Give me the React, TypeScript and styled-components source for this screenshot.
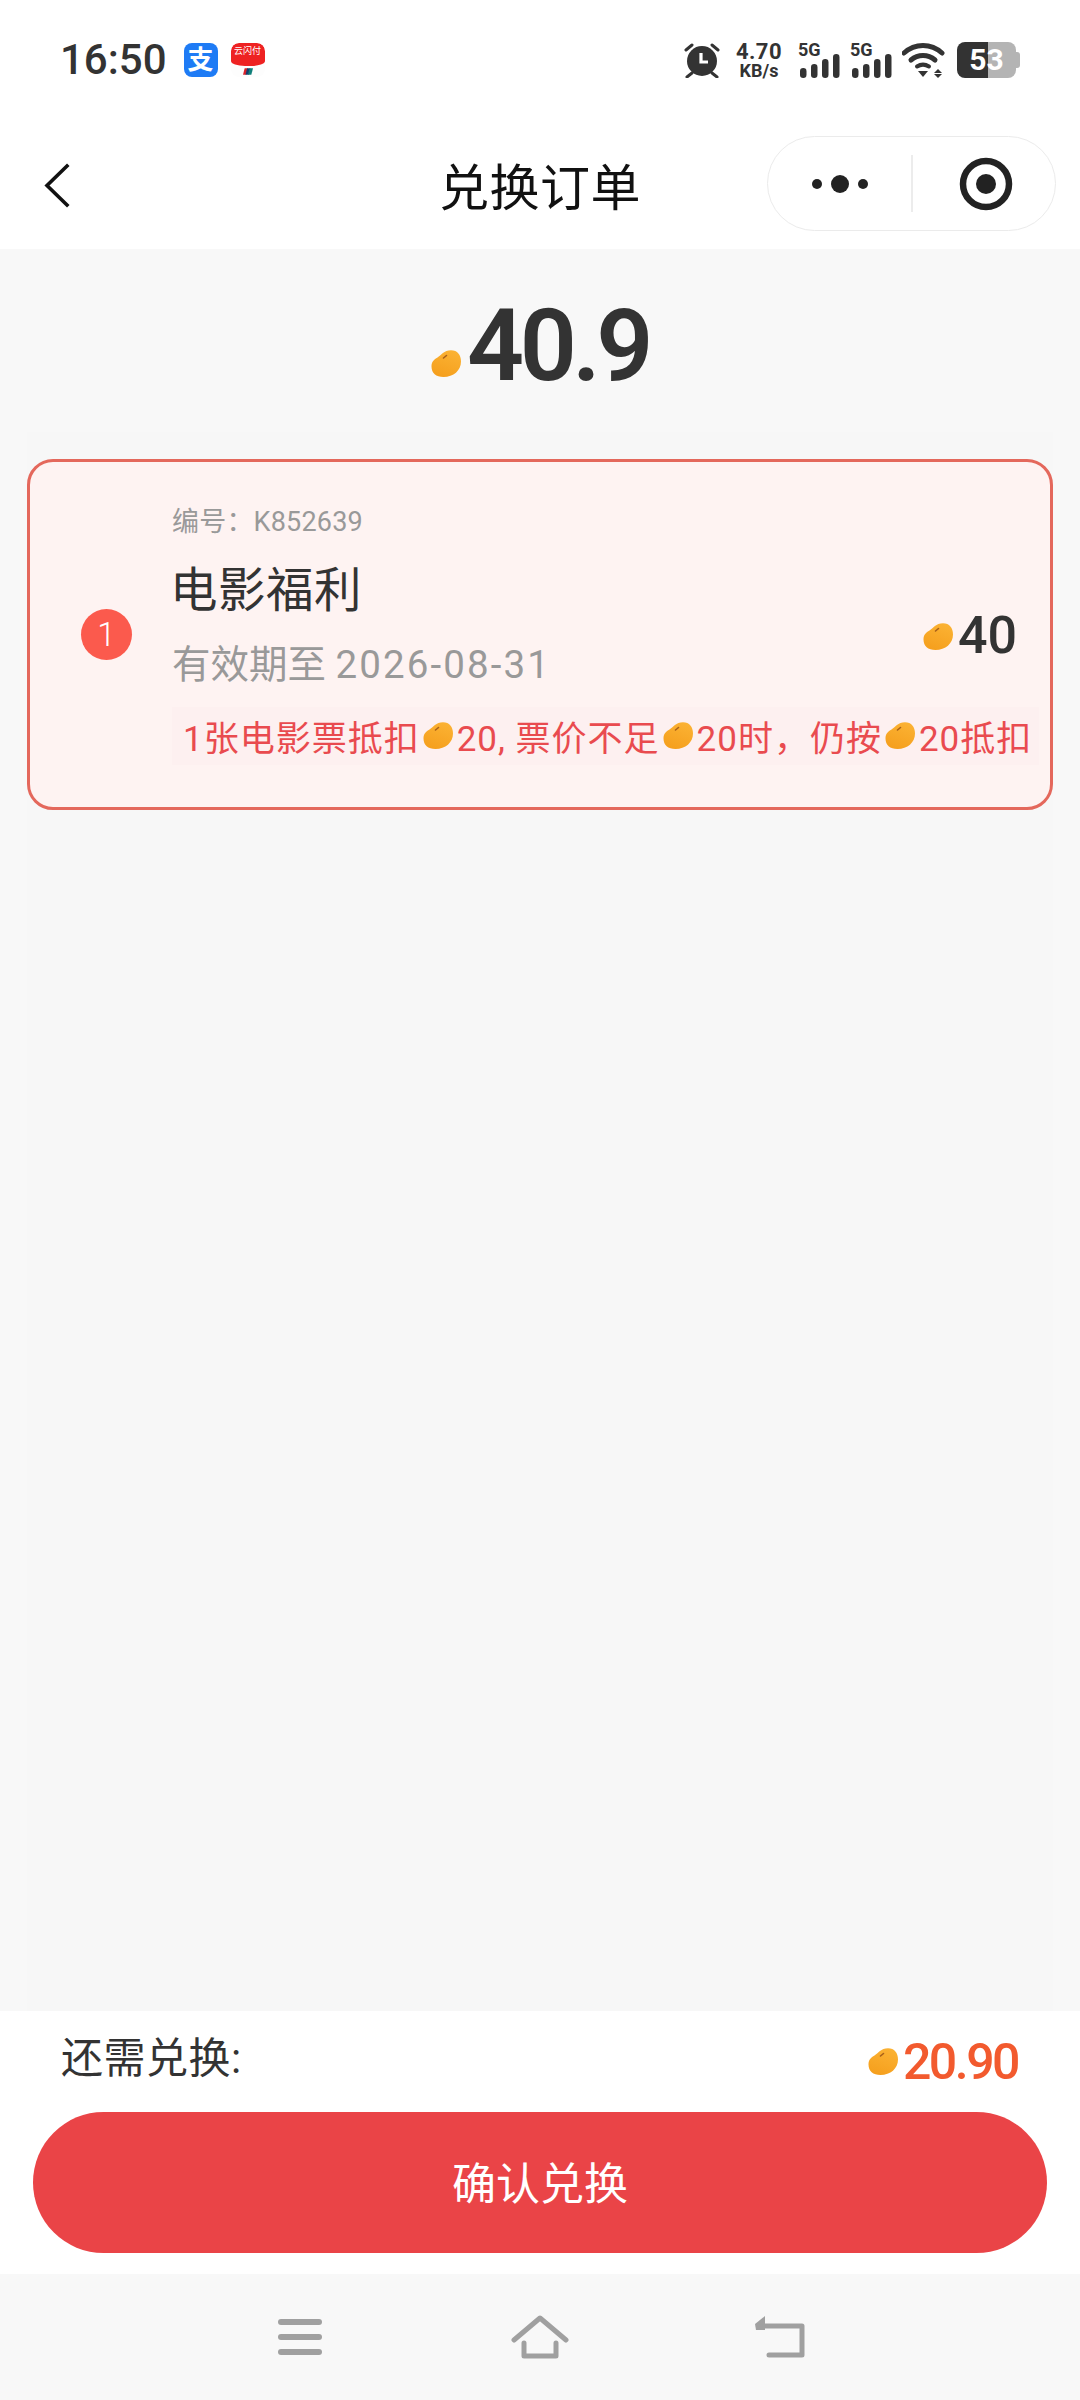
import { useId } from 'react';
import styled, { createGlobalStyle } from 'styled-components';

const GlobalStyle = createGlobalStyle`
  html, body {
    margin: 0;
    padding: 0;
    background: #f8f8f8;
    font-family: Roboto, "Noto Sans CJK SC", sans-serif;
  }
`;

function Bean({ width = 30, className }: { width?: number; className?: string }) {
  const id = useId();
  return (
    <BeanSvg className={className} width={width} height={width * 0.9} viewBox="0 0 30 27">
      <defs>
        <linearGradient id={id} x1="0.7" y1="0" x2="0.3" y2="1">
          <stop offset="0" stopColor="#fbb233" />
          <stop offset="1" stopColor="#f59f1d" />
        </linearGradient>
      </defs>
      <path
        d="M.5 16.500C.5 11.500 3 9.500 6.500 7.500C10 5.500 13 .3 20 .3C26.500 .3 30 5 30 11.500C30 20.500 22.500 27 12.500 27C5 27 .5 23 .5 16.500Z"
        fill={`url(#${id})`}
      />
      <path d="M12.500 8l3-2.500" stroke="#a8601a" strokeWidth="1.600" strokeLinecap="round" />
    </BeanSvg>
  );
}

function Signal() {
  return (
    <SignalBlock>
      <SignalLabel>5G</SignalLabel>
      <svg width="42" height="36" viewBox="0 0 42 36" fill="#333">
        <rect x="2" y="26" width="6.500" height="10" rx="3.200" />
        <rect x="13" y="22" width="6.500" height="14" rx="3.200" />
        <rect x="24" y="17" width="6.500" height="19" rx="3.200" />
        <rect x="35" y="12" width="6.500" height="24" rx="3.200" />
      </svg>
    </SignalBlock>
  );
}

export default function App() {
  return (
    <Page>
      <GlobalStyle />
      <StatusBar>
        <StatusLeft>
          <Clock>16:50</Clock>
          <AlipayIcon>支</AlipayIcon>
          <UnionIcon>
            <UnionTop>云闪付</UnionTop>
            <svg width="10" height="7" viewBox="0 0 12 8">
              <path d="M2 0h4L4 8H0z" fill="#d8232a" />
              <path d="M5 0h4L7 8H3z" fill="#14406e" />
              <path d="M8 0h4l-2 8H6z" fill="#0f7f7a" />
            </svg>
          </UnionIcon>
        </StatusLeft>
        <StatusRight>
          <svg width="36" height="36" viewBox="0 0 36 36">
            <circle cx="18" cy="19" r="15" fill="#333" />
            <path d="M17 11v9h7" fill="none" stroke="#fff" strokeWidth="3.200" />
            <path d="M2 8l6-5M34 8l-6-5M3 35l5-4M33 35l-5-4" stroke="#333" strokeWidth="3" strokeLinecap="round" />
          </svg>
          <Speed>
            <SpeedValue>4.70</SpeedValue>
            <SpeedUnit>KB/s</SpeedUnit>
          </Speed>
          <Signal />
          <Signal />
          <svg width="45" height="36" viewBox="0 0 45 36">
            <path d="M2 11C13 1 29 1 40 11" fill="none" stroke="#333" strokeWidth="5" strokeLinecap="round" />
            <path d="M9 18C16 12 26 12 33 18" fill="none" stroke="#333" strokeWidth="5" strokeLinecap="round" />
            <path d="M15 24.500C19 22 23 22 27 24.500" fill="none" stroke="#333" strokeWidth="4" strokeLinecap="round" />
            <path d="M16 29h10l-5 6z" fill="#333" />
            <path d="M36 27l-4 4h8zM36 36l-4-4h8z" fill="#333" />
          </svg>
          <Battery>
            <BatteryLevel>53</BatteryLevel>
            <BatteryNub />
          </Battery>
        </StatusRight>
      </StatusBar>

      <NavBar>
        <BackButton>
          <svg width="26" height="45" viewBox="0 0 26 45" fill="none" stroke="#111" strokeWidth="3.600" strokeLinecap="square">
            <path d="M23 3L3 22.500L23 42" />
          </svg>
        </BackButton>
        <NavTitle>兑换订单</NavTitle>
        <Capsule>
          <CapsuleCell>
            <svg width="58" height="20" viewBox="0 0 58 20" fill="#222">
              <circle cx="6" cy="10" r="5" />
              <circle cx="29" cy="10" r="9" />
              <circle cx="52" cy="10" r="5" />
            </svg>
          </CapsuleCell>
          <CapsuleDivider />
          <CapsuleCell $shift={4}>
            <svg width="54" height="54" viewBox="0 0 54 54">
              <circle cx="27" cy="27" r="23" fill="none" stroke="#222" strokeWidth="6.500" />
              <circle cx="27" cy="27" r="10" fill="#222" />
            </svg>
          </CapsuleCell>
        </Capsule>
      </NavBar>

      <AmountRow>
        <AmountBean width={30} />
        <AmountValue>40.9</AmountValue>
      </AmountRow>

      <List>
        <Card>
          <IndexBadge>1</IndexBadge>
          <CardBody>
            <CardMain>
              <CardInfo>
                <CardCode>编号：K852639</CardCode>
                <CardTitle>电影福利</CardTitle>
                <CardExpiry>
                  有效期至 <CardDate>2026-08-31</CardDate>
                </CardExpiry>
              </CardInfo>
              <CardPrice>
                <Bean width={30} />
                <CardPriceValue>40</CardPriceValue>
              </CardPrice>
            </CardMain>
            <Tip>
              1张电影票抵扣<TipBean width={30} />20, 票价不足<TipBean width={30} />20时，仍按<TipBean width={30} />20抵扣
            </Tip>
          </CardBody>
        </Card>
      </List>

      <Footer>
        <FooterRow>
          <FooterLabel>还需兑换:</FooterLabel>
          <FooterPrice>
            <Bean width={30} />
            <FooterValue>20.90</FooterValue>
          </FooterPrice>
        </FooterRow>
        <ConfirmButton>确认兑换</ConfirmButton>
      </Footer>

      <SystemNav>
        <svg width="44" height="36" viewBox="0 0 44 36" fill="#a0a0a0">
          <rect x="0" y="0" width="44" height="6" rx="3" />
          <rect x="0" y="15" width="44" height="6" rx="3" />
          <rect x="0" y="30" width="44" height="6" rx="3" />
        </svg>
        <svg width="58" height="44" viewBox="0 0 58 44" fill="none" stroke="#a0a0a0" strokeWidth="5" strokeLinecap="round" strokeLinejoin="round">
          <path d="M3 25L29 3L55 25" />
          <path d="M13 28V41H45V28" />
        </svg>
        <svg width="50" height="42" viewBox="0 0 50 42" fill="none">
          <path d="M8 10H47V39H14" stroke="#a0a0a0" strokeWidth="5" strokeLinecap="round" strokeLinejoin="round" />
          <path d="M10 0L0 8L1 14H10z" fill="#a0a0a0" />
        </svg>
      </SystemNav>
    </Page>
  );
}

const Page = styled.div`
  width: 1080px;
  height: 2400px;
  display: flex;
  flex-direction: column;
  background: #f8f8f8;
  overflow: hidden;
`;

const BeanSvg = styled.svg`
  display: block;
  flex-shrink: 0;
`;

// Status bar
const StatusBar = styled.div`
  height: 120px;
  background: #fff;
  display: flex;
  align-items: center;
  justify-content: space-between;
  padding: 0 60px;
  box-sizing: border-box;
`;

const StatusLeft = styled.div`
  display: flex;
  align-items: center;
`;

const Clock = styled.span`
  font-size: 42px;
  font-weight: 500;
  color: #333;
  line-height: 44px;
  margin-right: 17px;
`;

const AlipayIcon = styled.span`
  width: 34px;
  height: 34px;
  border-radius: 8px;
  background: #1e7bf5;
  color: #fff;
  font-size: 26px;
  font-weight: 700;
  line-height: 34px;
  text-align: center;
  margin-right: 13px;
`;

const UnionIcon = styled.span`
  width: 34px;
  height: 34px;
  border-radius: 8px;
  background: #fdfdfd;
  display: flex;
  flex-direction: column;
  align-items: center;
  gap: 2px;
  overflow: hidden;
`;

const UnionTop = styled.span`
  width: 34px;
  height: 23px;
  background: #ee2222;
  border-radius: 8px 8px 14px 14px / 8px 8px 5px 5px;
  color: #fff;
  font-size: 9px;
  line-height: 16px;
  text-align: center;
`;

const StatusRight = styled.div`
  display: flex;
  align-items: center;
  gap: 10px;
`;

const Speed = styled.div`
  width: 48px;
  display: flex;
  flex-direction: column;
  align-items: center;
  margin: 0 5px;
  color: #333;
  font-weight: 700;
`;

const SpeedValue = styled.span`
  font-size: 22px;
  line-height: 20px;
  letter-spacing: 0.4px;
`;

const SpeedUnit = styled.span`
  font-size: 18px;
  line-height: 17px;
`;

const SignalBlock = styled.div`
  position: relative;
  width: 42px;
  height: 36px;
`;

const SignalLabel = styled.span`
  position: absolute;
  left: 0;
  top: 0;
  font-size: 18px;
  line-height: 16px;
  font-weight: 700;
  color: #333;
`;

const Battery = styled.div`
  display: flex;
  align-items: center;
`;

const BatteryLevel = styled.div`
  width: 59px;
  height: 36px;
  border-radius: 8px;
  background: linear-gradient(90deg, #333 0 31px, #b4b4b4 31px);
  color: #fff;
  font-size: 30px;
  font-weight: 700;
  line-height: 36px;
  text-align: center;
`;

const BatteryNub = styled.div`
  width: 4px;
  height: 16px;
  border-radius: 0 3px 3px 0;
  background: #b4b4b4;
`;

// Navigation
const NavBar = styled.div`
  height: 129px;
  background: #fff;
  display: grid;
  grid-template-columns: 1fr auto 1fr;
  align-items: center;
  padding: 0 24px 0 44px;
  box-sizing: border-box;
`;

const BackButton = styled.div`
  display: flex;
  align-items: center;
  margin-top: 1px;
`;

const NavTitle = styled.h1`
  margin: 0 0 2px;
  position: relative;
  left: -10px;
  font-size: 50px;
  font-weight: 400;
  color: #111;
  letter-spacing: 0.5px;
`;

const Capsule = styled.div`
  justify-self: end;
  width: 289px;
  height: 95px;
  margin-top: -2px;
  box-sizing: border-box;
  border: 1.5px solid #ebebeb;
  border-radius: 48px;
  display: grid;
  grid-template-columns: 143px 2px 1fr;
  align-items: center;
`;

const CapsuleCell = styled.div<{ $shift?: number }>`
  display: flex;
  justify-content: center;
  align-items: center;
  padding-left: ${({ $shift }) => $shift || 0}px;
`;

const CapsuleDivider = styled.div`
  height: 57px;
  background: #ececec;
`;

// Amount
const AmountRow = styled.div`
  height: 183px;
  display: flex;
  justify-content: center;
  align-items: flex-start;
  padding-top: 47px;
  box-sizing: border-box;
  gap: 6px;
`;

const AmountBean = styled(Bean)`
  margin-top: 54px;
`;

const AmountValue = styled.span`
  font-size: 100px;
  line-height: 100px;
  font-weight: 600;
  color: #333;
  letter-spacing: -4.500px;
`;

// Order list
const List = styled.div`
  flex: 1;
  margin: 0 27px;
  padding-top: 27px;
  background: #f7f7f7;
`;

const Card = styled.div`
  height: 351px;
  box-sizing: border-box;
  border: 3px solid #e4685c;
  border-radius: 26px;
  background: #fef3f2;
  display: flex;
  align-items: center;
  padding: 0 11px 0 51px;
  gap: 40px;
`;

const IndexBadge = styled.span`
  width: 51px;
  height: 51px;
  border-radius: 50%;
  background: #fb5a4d;
  color: #fff;
  font-size: 33px;
  font-weight: 300;
  line-height: 51px;
  text-align: center;
  flex-shrink: 0;
`;

const CardBody = styled.div`
  flex: 1;
  min-width: 0;
  display: flex;
  flex-direction: column;
`;

const CardMain = styled.div`
  display: flex;
  align-items: flex-end;
  justify-content: space-between;
`;

const CardInfo = styled.div`
  display: flex;
  flex-direction: column;
`;

const CardCode = styled.div`
  font-size: 27px;
  line-height: 36px;
  color: #999;
  letter-spacing: 0.2px;
`;

const CardTitle = styled.div`
  margin: 21px 0 0 -2px;
  font-size: 47.500px;
  line-height: 60px;
  color: #333;
  letter-spacing: 0.5px;
`;

const CardExpiry = styled.div`
  margin-top: 22px;
  font-size: 38.500px;
  line-height: 44px;
  color: #999;
`;

const CardDate = styled.span`
  letter-spacing: 2.100px;
`;

const CardPrice = styled.div`
  display: flex;
  align-items: center;
  gap: 5px;
  margin: 0 22px 21px 0;
`;

const CardPriceValue = styled.span`
  font-size: 52px;
  line-height: 60px;
  font-weight: 500;
  color: #333;
`;

const Tip = styled.div`
  margin-top: 20px;
  height: 58px;
  box-sizing: border-box;
  padding: 0 0 2px 11px;
  display: flex;
  align-items: center;
  background: #fdf0f0;
  color: #e94b4f;
  font-size: 35px;
  letter-spacing: 1px;
  white-space: nowrap;
`;

const TipBean = styled(Bean)`
  margin: 0 4px 0 3px;
`;

// Footer
const Footer = styled.div`
  height: 263px;
  background: #fff;
  display: flex;
  flex-direction: column;
`;

const FooterRow = styled.div`
  height: 101px;
  display: flex;
  align-items: center;
  justify-content: space-between;
  padding: 0 62px 0 61px;
`;

const FooterLabel = styled.span`
  font-size: 42px;
  line-height: 56px;
  margin-bottom: 6px;
  color: #333;
  letter-spacing: 0.5px;
`;

const FooterPrice = styled.div`
  display: flex;
  align-items: center;
  gap: 5px;
`;

const FooterValue = styled.span`
  font-size: 50px;
  font-weight: 500;
  color: #f25a2e;
  letter-spacing: -2.500px;
`;

const ConfirmButton = styled.button`
  height: 141px;
  margin: 0 33px;
  border: none;
  border-radius: 71px;
  background: #ea4447;
  color: #fff;
  font-family: inherit;
  font-size: 44px;
  padding: 0 0 4px;
`;

const SystemNav = styled.div`
  height: 126px;
  background: #f8f8f8;
  display: grid;
  grid-template-columns: repeat(3, 240px);
  justify-content: center;
  justify-items: center;
  align-items: center;
`;
